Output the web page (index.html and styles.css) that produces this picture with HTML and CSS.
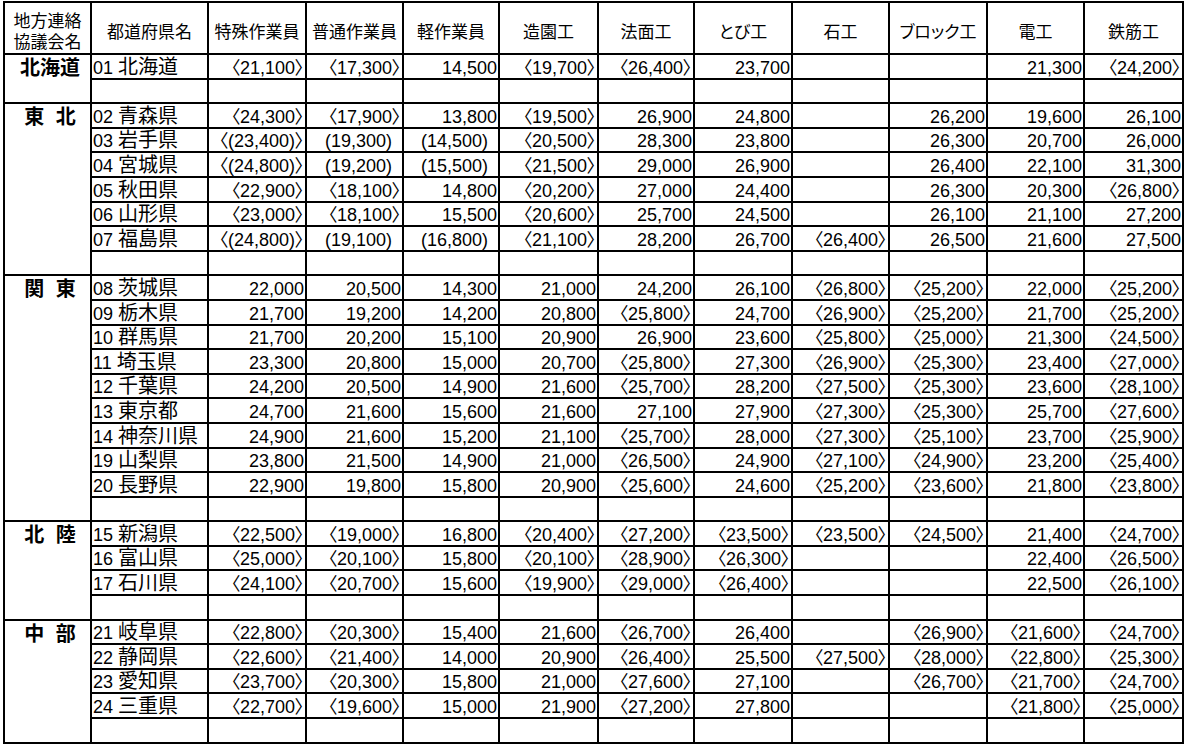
FILE: index.html
```html
<!DOCTYPE html>
<html lang="ja">
<head>
<meta charset="utf-8">
<title>地方連絡協議会別 労務単価</title>
<link rel="stylesheet" href="styles.css">
</head>
<body>
<table class="sheet">
<colgroup>
<col class="c-reg"><col class="c-pref"><col class="c-n1"><col class="c-n2"><col class="c-n3"><col class="c-n4"><col class="c-n5"><col class="c-n6"><col class="c-n7"><col class="c-n8"><col class="c-n9"><col class="c-n10">
</colgroup>
<thead>
<tr class="head">
<th class="h-reg">地方連絡<br>協議会名</th><th>都道府県名</th><th>特殊作業員</th><th>普通作業員</th><th>軽作業員</th><th>造園工</th><th>法面工</th><th>とび工</th><th>石工</th><th>ブロック工</th><th>電工</th><th>鉄筋工</th>
</tr>
</thead>
<tbody>
<tr><td class="r" rowspan="2">北海道</td><td class="p">01 <span class="k">北海道</span></td><td>〈21,100〉</td><td>〈17,300〉</td><td>14,500</td><td>〈19,700〉</td><td>〈26,400〉</td><td>23,700</td><td></td><td></td><td>21,300</td><td>〈24,200〉</td></tr>
<tr class="blank"><td class="p"></td><td></td><td></td><td></td><td></td><td></td><td></td><td></td><td></td><td></td><td></td></tr>

<tr><td class="r" rowspan="7">東 北</td><td class="p">02 <span class="k">青森県</span></td><td>〈24,300〉</td><td>〈17,900〉</td><td>13,800</td><td>〈19,500〉</td><td>26,900</td><td>24,800</td><td></td><td>26,200</td><td>19,600</td><td>26,100</td></tr>
<tr><td class="p">03 <span class="k">岩手県</span></td><td>〈(23,400)〉</td><td class="pp">(19,300)</td><td class="pp">(14,500)</td><td>〈20,500〉</td><td>28,300</td><td>23,800</td><td></td><td>26,300</td><td>20,700</td><td>26,000</td></tr>
<tr><td class="p">04 <span class="k">宮城県</span></td><td>〈(24,800)〉</td><td class="pp">(19,200)</td><td class="pp">(15,500)</td><td>〈21,500〉</td><td>29,000</td><td>26,900</td><td></td><td>26,400</td><td>22,100</td><td>31,300</td></tr>
<tr><td class="p">05 <span class="k">秋田県</span></td><td>〈22,900〉</td><td>〈18,100〉</td><td>14,800</td><td>〈20,200〉</td><td>27,000</td><td>24,400</td><td></td><td>26,300</td><td>20,300</td><td>〈26,800〉</td></tr>
<tr><td class="p">06 <span class="k">山形県</span></td><td>〈23,000〉</td><td>〈18,100〉</td><td>15,500</td><td>〈20,600〉</td><td>25,700</td><td>24,500</td><td></td><td>26,100</td><td>21,100</td><td>27,200</td></tr>
<tr><td class="p">07 <span class="k">福島県</span></td><td>〈(24,800)〉</td><td class="pp">(19,100)</td><td class="pp">(16,800)</td><td>〈21,100〉</td><td>28,200</td><td>26,700</td><td>〈26,400〉</td><td>26,500</td><td>21,600</td><td>27,500</td></tr>
<tr class="blank"><td class="p"></td><td></td><td></td><td></td><td></td><td></td><td></td><td></td><td></td><td></td><td></td></tr>

<tr><td class="r" rowspan="10">関 東</td><td class="p">08 <span class="k">茨城県</span></td><td>22,000</td><td>20,500</td><td>14,300</td><td>21,000</td><td>24,200</td><td>26,100</td><td>〈26,800〉</td><td>〈25,200〉</td><td>22,000</td><td>〈25,200〉</td></tr>
<tr><td class="p">09 <span class="k">栃木県</span></td><td>21,700</td><td>19,200</td><td>14,200</td><td>20,800</td><td>〈25,800〉</td><td>24,700</td><td>〈26,900〉</td><td>〈25,200〉</td><td>21,700</td><td>〈25,200〉</td></tr>
<tr><td class="p">10 <span class="k">群馬県</span></td><td>21,700</td><td>20,200</td><td>15,100</td><td>20,900</td><td>26,900</td><td>23,600</td><td>〈25,800〉</td><td>〈25,000〉</td><td>21,300</td><td>〈24,500〉</td></tr>
<tr><td class="p">11 <span class="k">埼玉県</span></td><td>23,300</td><td>20,800</td><td>15,000</td><td>20,700</td><td>〈25,800〉</td><td>27,300</td><td>〈26,900〉</td><td>〈25,300〉</td><td>23,400</td><td>〈27,000〉</td></tr>
<tr><td class="p">12 <span class="k">千葉県</span></td><td>24,200</td><td>20,500</td><td>14,900</td><td>21,600</td><td>〈25,700〉</td><td>28,200</td><td>〈27,500〉</td><td>〈25,300〉</td><td>23,600</td><td>〈28,100〉</td></tr>
<tr><td class="p">13 <span class="k">東京都</span></td><td>24,700</td><td>21,600</td><td>15,600</td><td>21,600</td><td>27,100</td><td>27,900</td><td>〈27,300〉</td><td>〈25,300〉</td><td>25,700</td><td>〈27,600〉</td></tr>
<tr><td class="p">14 <span class="k">神奈川県</span></td><td>24,900</td><td>21,600</td><td>15,200</td><td>21,100</td><td>〈25,700〉</td><td>28,000</td><td>〈27,300〉</td><td>〈25,100〉</td><td>23,700</td><td>〈25,900〉</td></tr>
<tr><td class="p">19 <span class="k">山梨県</span></td><td>23,800</td><td>21,500</td><td>14,900</td><td>21,000</td><td>〈26,500〉</td><td>24,900</td><td>〈27,100〉</td><td>〈24,900〉</td><td>23,200</td><td>〈25,400〉</td></tr>
<tr><td class="p">20 <span class="k">長野県</span></td><td>22,900</td><td>19,800</td><td>15,800</td><td>20,900</td><td>〈25,600〉</td><td>24,600</td><td>〈25,200〉</td><td>〈23,600〉</td><td>21,800</td><td>〈23,800〉</td></tr>
<tr class="blank"><td class="p"></td><td></td><td></td><td></td><td></td><td></td><td></td><td></td><td></td><td></td><td></td></tr>

<tr><td class="r" rowspan="4">北 陸</td><td class="p">15 <span class="k">新潟県</span></td><td>〈22,500〉</td><td>〈19,000〉</td><td>16,800</td><td>〈20,400〉</td><td>〈27,200〉</td><td>〈23,500〉</td><td>〈23,500〉</td><td>〈24,500〉</td><td>21,400</td><td>〈24,700〉</td></tr>
<tr><td class="p">16 <span class="k">富山県</span></td><td>〈25,000〉</td><td>〈20,100〉</td><td>15,800</td><td>〈20,100〉</td><td>〈28,900〉</td><td>〈26,300〉</td><td></td><td></td><td>22,400</td><td>〈26,500〉</td></tr>
<tr><td class="p">17 <span class="k">石川県</span></td><td>〈24,100〉</td><td>〈20,700〉</td><td>15,600</td><td>〈19,900〉</td><td>〈29,000〉</td><td>〈26,400〉</td><td></td><td></td><td>22,500</td><td>〈26,100〉</td></tr>
<tr class="blank"><td class="p"></td><td></td><td></td><td></td><td></td><td></td><td></td><td></td><td></td><td></td><td></td></tr>

<tr><td class="r" rowspan="5">中 部</td><td class="p">21 <span class="k">岐阜県</span></td><td>〈22,800〉</td><td>〈20,300〉</td><td>15,400</td><td>21,600</td><td>〈26,700〉</td><td>26,400</td><td></td><td>〈26,900〉</td><td>〈21,600〉</td><td>〈24,700〉</td></tr>
<tr><td class="p">22 <span class="k">静岡県</span></td><td>〈22,600〉</td><td>〈21,400〉</td><td>14,000</td><td>20,900</td><td>〈26,400〉</td><td>25,500</td><td>〈27,500〉</td><td>〈28,000〉</td><td>〈22,800〉</td><td>〈25,300〉</td></tr>
<tr><td class="p">23 <span class="k">愛知県</span></td><td>〈23,700〉</td><td>〈20,300〉</td><td>15,800</td><td>21,000</td><td>〈27,600〉</td><td>27,100</td><td></td><td>〈26,700〉</td><td>〈21,700〉</td><td>〈24,700〉</td></tr>
<tr><td class="p">24 <span class="k">三重県</span></td><td>〈22,700〉</td><td>〈19,600〉</td><td>15,000</td><td>21,900</td><td>〈27,200〉</td><td>27,800</td><td></td><td></td><td>〈21,800〉</td><td>〈25,000〉</td></tr>
<tr class="blank"><td class="p"></td><td></td><td></td><td></td><td></td><td></td><td></td><td></td><td></td><td></td><td></td></tr>
</tbody>
</table>
</body>
</html>
```

FILE: styles.css
```css
html, body {
  margin: 0;
  background: #ffffff;
}

body {
  padding: 1px 0 0 3px;
  font-family: "Liberation Sans", "Noto Sans CJK JP", sans-serif;
  color: #000000;
}

.sheet {
  border-collapse: collapse;
  table-layout: fixed;
  width: 1181px;
  font-feature-settings: "palt";
}

.c-reg { width: 87px; }
.c-pref { width: 117px; }
.c-n1 { width: 98px; }
.c-n2 { width: 97px; }
.c-n3 { width: 96px; }
.c-n4 { width: 99px; }
.c-n5 { width: 96px; }
.c-n6 { width: 98px; }
.c-n7 { width: 97px; }
.c-n8 { width: 98px; }
.c-n9 { width: 97px; }
.c-n10 { width: 99px; }

.sheet th,
.sheet td {
  border: 2px solid #000000;
  white-space: nowrap;
}

.head {
  height: 52px;
}

.head th {
  font-family: "Noto Sans CJK JP", sans-serif;
  font-weight: normal;
  font-size: 17px;
  line-height: 21px;
  text-align: center;
  vertical-align: middle;
  padding: 4px 0 0 0;
}

.sheet tbody tr {
  height: 24.6px;
}

.sheet td {
  font-size: 18px;
  line-height: 18px;
  text-align: right;
  vertical-align: bottom;
  padding: 0 1px 1px 1px;
}

.sheet td.pp {
  padding-right: 10px;
}

.sheet td.p {
  text-align: left;
  padding-left: 1px;
}

.k {
  font-family: "Noto Sans CJK JP", sans-serif;
  font-size: 20px;
  line-height: 18px;
}

.sheet td.r {
  font-family: "Noto Sans CJK JP", sans-serif;
  font-size: 20px;
  font-weight: bold;
  text-align: center;
  vertical-align: top;
  line-height: 22px;
  padding: 1px 0 0 5px;
  word-spacing: 7px;
}
```
